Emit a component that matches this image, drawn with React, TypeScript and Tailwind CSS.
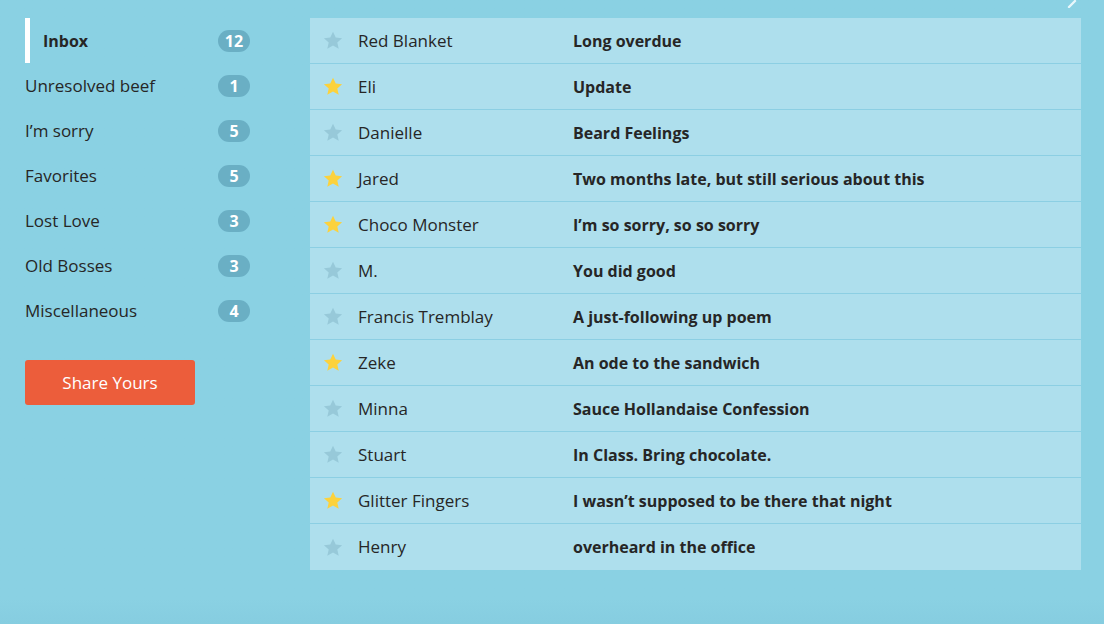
import React from "react";

const folders = [
  { name: "Inbox", count: 12, active: true },
  { name: "Unresolved beef", count: 1 },
  { name: "I’m sorry", count: 5 },
  { name: "Favorites", count: 5 },
  { name: "Lost Love", count: 3 },
  { name: "Old Bosses", count: 3 },
  { name: "Miscellaneous", count: 4 },
];

const mails = [
  { from: "Red Blanket", subject: "Long overdue", star: false },
  { from: "Eli", subject: "Update", star: true },
  { from: "Danielle", subject: "Beard Feelings", star: false },
  { from: "Jared", subject: "Two months late, but still serious about this", star: true },
  { from: "Choco Monster", subject: "I’m so sorry, so so sorry", star: true },
  { from: "M.", subject: "You did good", star: false },
  { from: "Francis Tremblay", subject: "A just-following up poem", star: false },
  { from: "Zeke", subject: "An ode to the sandwich", star: true },
  { from: "Minna", subject: "Sauce Hollandaise Confession", star: false },
  { from: "Stuart", subject: "In Class. Bring chocolate.", star: false },
  { from: "Glitter Fingers", subject: "I wasn’t supposed to be there that night", star: true },
  { from: "Henry", subject: "overheard in the office", star: false },
];

function Star({ on }: { on: boolean }) {
  return (
    <svg width="20" height="19" viewBox="0 0 24 23" className="shrink-0">
      <path
        d="M12 0.8l3.3 7.1 7.7.8-5.8 5.2 1.7 7.6L12 17.6l-6.9 3.9 1.7-7.6L1 8.7l7.7-.8z"
        fill={on ? "#fcd23c" : "#97c9d9"}
      />
    </svg>
  );
}

export default function App() {
  return (
    <div
      className="relative w-[1104px] h-[624px] overflow-hidden bg-gradient-to-b from-[#8ad1e3] via-[#8ad1e3] via-[96%] to-[#86cde0] text-[#262626]"
      style={{ fontFamily: "'Open Sans', Lato, sans-serif" }}
    >
      <svg className="absolute right-[24px] top-0" width="14" height="8" viewBox="0 0 14 8">
        <path d="M3 7L9 1" stroke="#e8f7fb" strokeWidth="2.4" strokeLinecap="round" />
      </svg>
      <div className="flex pt-[18px]">
        <div className="w-[310px] shrink-0 pl-[25px] pr-[60px]">
          <ul>
            {folders.map((f) => (
              <li
                key={f.name}
                className={`flex items-center justify-between h-[45px] ${
                  f.active ? "border-l-[5px] border-white pl-[13px] font-bold text-[16px]" : "text-[17px]"
                }`}
              >
                <span>{f.name}</span>
                <span className="flex items-center justify-center w-[32px] h-[22px] rounded-full bg-[#6aafc4] text-white text-[16px] font-bold">
                  {f.count}
                </span>
              </li>
            ))}
          </ul>
          <button className="mt-[27px] w-[170px] h-[45px] rounded-[3px] bg-[#ec5d3b] text-white text-[17px]">
            Share Yours
          </button>
        </div>
        <div className="w-[771px] bg-[#aedfed]">
          {mails.map((m, i) => (
            <div
              key={i}
              className={`flex items-center h-[46px] text-[17px] ${
                i < mails.length - 1 ? "border-b border-[#8ccfe3]" : ""
              }`}
            >
              <div className="w-[48px] flex justify-center pr-[2px]">
                <Star on={m.star} />
              </div>
              <div className="w-[215px]">{m.from}</div>
              <div className="font-bold text-[16px]">{m.subject}</div>
            </div>
          ))}
        </div>
      </div>
    </div>
  );
}
